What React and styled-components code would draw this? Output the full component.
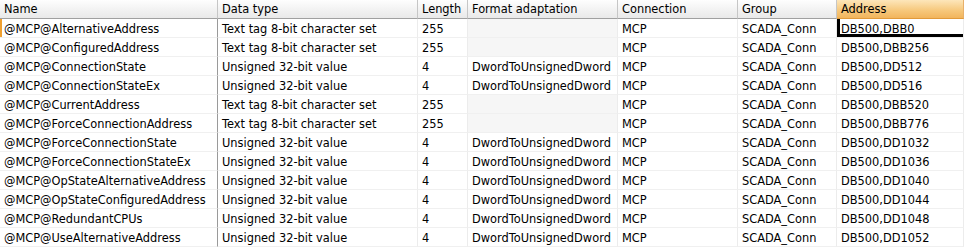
import React from "react";
import styled, { createGlobalStyle, css } from "styled-components";

const GlobalStyle = createGlobalStyle`
  html, body {
    margin: 0;
    padding: 0;
    background: #ffffff;
  }
  body {
    font-family: "DejaVu Sans", Tahoma, sans-serif;
    font-size: 11.4px;
    color: #000;
  }
`;

const columns = [
  { key: "name", label: "Name", width: 218 },
  { key: "type", label: "Data type", width: 200 },
  { key: "length", label: "Length", width: 50 },
  { key: "format", label: "Format adaptation", width: 150 },
  { key: "conn", label: "Connection", width: 120 },
  { key: "group", label: "Group", width: 99 },
  { key: "address", label: "Address", width: 127 },
];

const TEXT8 = "Text tag 8-bit character set";
const U32 = "Unsigned 32-bit value";
const DW = "DwordToUnsignedDword";

const rows = [
  ["@MCP@AlternativeAddress", TEXT8, "255", "", "DB500,DBB0"],
  ["@MCP@ConfiguredAddress", TEXT8, "255", "", "DB500,DBB256"],
  ["@MCP@ConnectionState", U32, "4", DW, "DB500,DD512"],
  ["@MCP@ConnectionStateEx", U32, "4", DW, "DB500,DD516"],
  ["@MCP@CurrentAddress", TEXT8, "255", "", "DB500,DBB520"],
  ["@MCP@ForceConnectionAddress", TEXT8, "255", "", "DB500,DBB776"],
  ["@MCP@ForceConnectionState", U32, "4", DW, "DB500,DD1032"],
  ["@MCP@ForceConnectionStateEx", U32, "4", DW, "DB500,DD1036"],
  ["@MCP@OpStateAlternativeAddress", U32, "4", DW, "DB500,DD1040"],
  ["@MCP@OpStateConfiguredAddress", U32, "4", DW, "DB500,DD1044"],
  ["@MCP@RedundantCPUs", U32, "4", DW, "DB500,DD1048"],
  ["@MCP@UseAlternativeAddress", U32, "4", DW, "DB500,DD1052"],
];

const Grid = styled.div`
  display: grid;
  grid-template-columns: ${columns.map((c) => c.width + "px").join(" ")};
  grid-auto-rows: 19px;
  width: 964px;
  overflow: hidden;
`;

const HeaderCell = styled.div`
  display: flex;
  align-items: center;
  padding: 0 4px;
  height: 19px;
  box-sizing: border-box;
  white-space: nowrap;
  overflow: hidden;
  background: ${(p) =>
    p.$sorted
      ? "linear-gradient(#fde6ba, #f6c77a 60%, #f2b55c)"
      : "linear-gradient(#fefefe, #f1f1f1 60%, #e9e9e9)"};
  border-bottom: 1px solid ${(p) => (p.$sorted ? "#e19a3a" : "#a0a0a0")};
  border-right: 1px solid ${(p) => (p.$sorted ? "#e8b06a" : "#c6c6c6")};
`;

const Cell = styled.div`
  display: flex;
  align-items: center;
  padding: 1px 4px 0;
  box-sizing: border-box;
  white-space: nowrap;
  overflow: hidden;
  background: ${(p) => (p.$muted ? "#f6f6f6" : "#ffffff")};
  border-bottom: 1px solid #f0f0f0;
  border-right: 1px solid ${(p) => (p.$frozen ? "#9a9a9a" : "#ececec")};
  ${(p) =>
    p.$current &&
    css`
      box-shadow: inset 2px 0 0 #f0a030;
    `}
  ${(p) =>
    p.$selected &&
    css`
      box-shadow: inset 3px 0 0 #000, inset 0 -3px 0 #000;
    `}
`;

export default function App() {
  return (
    <>
      <GlobalStyle />
      <Grid>
        {columns.map((c) => (
          <HeaderCell key={c.key} $sorted={c.key === "address"}>
            {c.label}
          </HeaderCell>
        ))}
        {rows.map(([name, type, len, fmt, addr], i) => (
          <React.Fragment key={name}>
            <Cell $frozen $current={i === 0}>{name}</Cell>
            <Cell>{type}</Cell>
            <Cell>{len}</Cell>
            <Cell $muted={!fmt}>{fmt}</Cell>
            <Cell>MCP</Cell>
            <Cell>SCADA_Conn</Cell>
            <Cell $selected={i === 0}>{addr}</Cell>
          </React.Fragment>
        ))}
      </Grid>
    </>
  );
}
